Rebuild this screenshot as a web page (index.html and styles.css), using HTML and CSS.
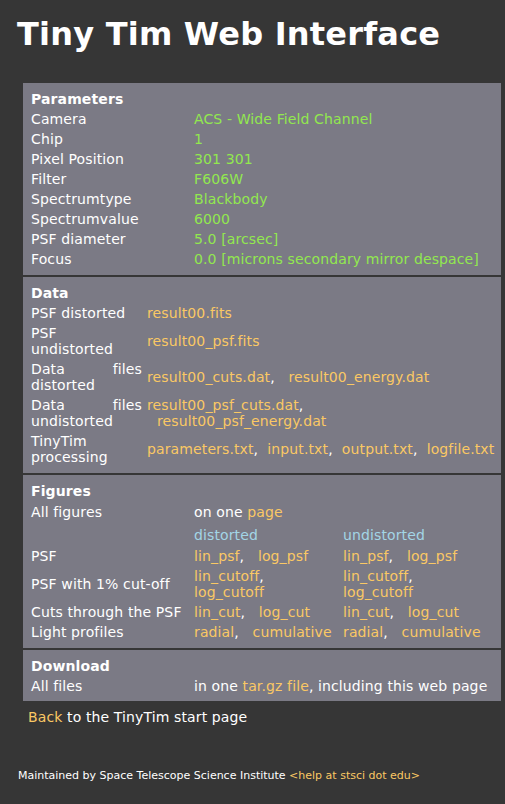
FILE: index.html
```html
<!DOCTYPE html>
<html>
<head>
<meta charset="utf-8">
<title>Tiny Tim Web Interface</title>
<link rel="stylesheet" href="styles.css">
</head>
<body>
<h1 class="title">Tiny Tim Web Interface</h1>
<div class="panel">
  <section class="sec">
    <div class="sec-title">Parameters</div>
    <div class="row cols2"><div>Camera</div><div class="val">ACS - Wide Field Channel</div></div>
    <div class="row cols2"><div>Chip</div><div class="val">1</div></div>
    <div class="row cols2"><div>Pixel Position</div><div class="val">301 301</div></div>
    <div class="row cols2"><div>Filter</div><div class="val">F606W</div></div>
    <div class="row cols2"><div>Spectrumtype</div><div class="val">Blackbody</div></div>
    <div class="row cols2"><div>Spectrumvalue</div><div class="val">6000</div></div>
    <div class="row cols2"><div>PSF diameter</div><div class="val">5.0 [arcsec]</div></div>
    <div class="row cols2"><div>Focus</div><div class="val">0.0 [microns secondary mirror despace]</div></div>
  </section>
  <section class="sec">
    <div class="sec-title">Data</div>
    <div class="row data"><div class="lbl">PSF distorted</div><div><a href="#">result00.fits</a></div></div>
    <div class="row data"><div class="lbl">PSF undistorted</div><div><a href="#">result00_psf.fits</a></div></div>
    <div class="row data"><div class="lbl">Data files distorted</div><div><a href="#">result00_cuts.dat</a>, &nbsp; <a href="#">result00_energy.dat</a></div></div>
    <div class="row data"><div class="lbl">Data files undistorted</div><div><a href="#">result00_psf_cuts.dat</a>,<br><a class="indent" href="#">result00_psf_energy.dat</a></div></div>
    <div class="row data"><div class="lbl">TinyTim processing</div><div class="nowrap"><a href="#">parameters.txt</a>,&nbsp; <a href="#">input.txt</a>,&nbsp; <a href="#">output.txt</a>,&nbsp; <a href="#">logfile.txt</a></div></div>
  </section>
  <section class="sec">
    <div class="sec-title">Figures</div>
    <div class="row cols3 r-all"><div>All figures</div><div class="span2">on one <a href="#">page</a></div></div>
    <div class="row cols3 r-head"><div></div><div class="colhead">distorted</div><div class="colhead">undistorted</div></div>
    <div class="row cols3 r-psf"><div>PSF</div><div><a href="#">lin_psf</a>, &nbsp; <a href="#">log_psf</a></div><div><a href="#">lin_psf</a>, &nbsp; <a href="#">log_psf</a></div></div>
    <div class="row cols3"><div>PSF with 1% cut-off</div><div><a href="#">lin_cutoff</a>, &nbsp; <a href="#">log_cutoff</a></div><div><a href="#">lin_cutoff</a>, &nbsp; <a href="#">log_cutoff</a></div></div>
    <div class="row cols3"><div>Cuts through the PSF</div><div><a href="#">lin_cut</a>, &nbsp; <a href="#">log_cut</a></div><div><a href="#">lin_cut</a>, &nbsp; <a href="#">log_cut</a></div></div>
    <div class="row cols3"><div>Light profiles</div><div><a href="#">radial</a>, &nbsp; <a href="#">cumulative</a></div><div><a href="#">radial</a>, &nbsp; <a href="#">cumulative</a></div></div>
  </section>
  <section class="sec sec-last">
    <div class="sec-title">Download</div>
    <div class="row cols2"><div>All files</div><div>in one <a href="#">tar.gz file</a>, including this web page</div></div>
  </section>
</div>
<p class="back"><a href="#">Back</a> to the TinyTim start page</p>
<p class="footer">Maintained by Space Telescope Science Institute <a href="#">&lt;help at stsci dot edu&gt;</a></p>
</body>
</html>
```
FILE: styles.css
```css
html, body {
  margin: 0;
  padding: 0;
  background: #363636;
  color: #ffffff;
  font-family: "DejaVu Sans", Verdana, sans-serif;
  font-size: 14px;
  line-height: 16px;
}

a {
  color: #fac864;
  text-decoration: none;
}

.title {
  margin: 15px 0 0 17px;
  font-size: 32px;
  line-height: 38px;
  font-weight: bold;
  letter-spacing: 0.22px;
  color: #ffffff;
}

.panel {
  margin: 30px 4px 0 23px;
  display: flex;
  flex-direction: column;
  gap: 2px;
  letter-spacing: 0.12px;
}

.sec {
  background: #7b7a85;
  padding: 6px 2px 6px 8px;
}

.sec-last {
  padding-bottom: 5px;
}

.sec-title {
  font-weight: bold;
  padding: 2px 0;
}

.row {
  display: grid;
  align-items: center;
  padding: 2px 0;
}

.cols2 {
  grid-template-columns: 163px 1fr;
}

.cols3 {
  grid-template-columns: 163px 149px 145px;
}

.span2 {
  grid-column: 2 / span 2;
}

.data {
  grid-template-columns: 111px 1fr;
  column-gap: 5px;
}

.data .lbl {
  text-align: justify;
}

.nowrap {
  white-space: nowrap;
}

.indent {
  margin-left: 10px;
}

.val {
  color: #92e84f;
}

.colhead {
  color: #a3d5e6;
}

.r-all {
  padding: 3px 0 2px;
}

.r-head {
  padding: 5px 0 2px;
}

.r-psf {
  padding: 3px 0 2px;
}

.back {
  margin: 8px 0 0 28px;
  letter-spacing: 0.12px;
}

.footer {
  margin: 44px 0 0 18px;
  font-size: 11px;
  line-height: 13px;
}
```
